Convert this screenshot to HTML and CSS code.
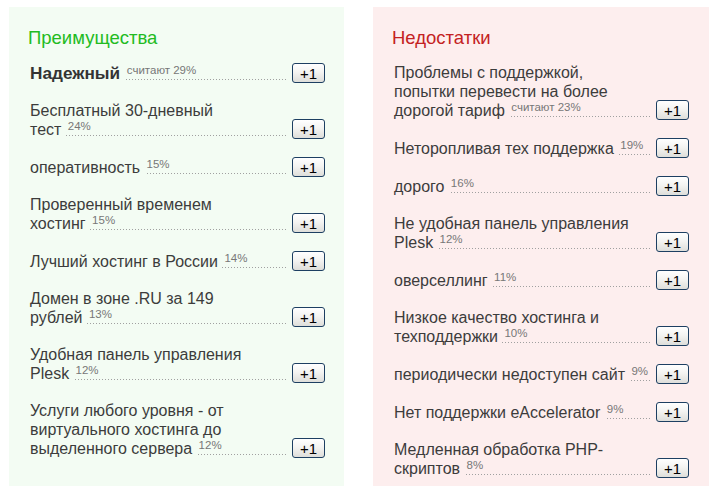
FILE: index.html
```html
<!DOCTYPE html>
<html lang="ru">
<head>
<meta charset="utf-8">
<title>Преимущества и недостатки</title>
<link rel="stylesheet" href="styles.css">
</head>
<body>
<div class="wrap">
  <section class="panel pros">
    <h2 class="title">Преимущества</h2>
    <ul class="list">
      <li class="item"><div class="label"><span class="t strong">Надежный </span><sup>считают 29%</sup></div><button class="plus">+1</button></li>
      <li class="item"><div class="label"><span class="t">Бесплатный 30-дневный<br>тест </span><sup>24%</sup></div><button class="plus">+1</button></li>
      <li class="item"><div class="label"><span class="t">оперативность </span><sup>15%</sup></div><button class="plus">+1</button></li>
      <li class="item"><div class="label"><span class="t">Проверенный временем<br>хостинг </span><sup>15%</sup></div><button class="plus">+1</button></li>
      <li class="item"><div class="label"><span class="t">Лучший хостинг в России </span><sup>14%</sup></div><button class="plus">+1</button></li>
      <li class="item"><div class="label"><span class="t">Домен в зоне .RU за 149<br>рублей </span><sup>13%</sup></div><button class="plus">+1</button></li>
      <li class="item"><div class="label"><span class="t">Удобная панель управления<br>Plesk </span><sup>12%</sup></div><button class="plus">+1</button></li>
      <li class="item"><div class="label"><span class="t">Услуги любого уровня - от<br>виртуального хостинга до<br>выделенного сервера </span><sup>12%</sup></div><button class="plus">+1</button></li>
    </ul>
  </section>
  <section class="panel cons">
    <h2 class="title">Недостатки</h2>
    <ul class="list">
      <li class="item"><div class="label"><span class="t">Проблемы с поддержкой,<br>попытки перевести на более<br>дорогой тариф </span><sup>считают 23%</sup></div><button class="plus">+1</button></li>
      <li class="item"><div class="label"><span class="t">Неторопливая тех поддержка </span><sup>19%</sup></div><button class="plus">+1</button></li>
      <li class="item"><div class="label"><span class="t">дорого </span><sup>16%</sup></div><button class="plus">+1</button></li>
      <li class="item"><div class="label"><span class="t">Не удобная панель управления<br>Plesk </span><sup>12%</sup></div><button class="plus">+1</button></li>
      <li class="item"><div class="label"><span class="t">оверселлинг </span><sup>11%</sup></div><button class="plus">+1</button></li>
      <li class="item"><div class="label"><span class="t">Низкое качество хостинга и<br>техподдержки </span><sup>10%</sup></div><button class="plus">+1</button></li>
      <li class="item"><div class="label"><span class="t">периодически недоступен сайт </span><sup>9%</sup></div><button class="plus">+1</button></li>
      <li class="item"><div class="label"><span class="t">Нет поддержки eAccelerator </span><sup>9%</sup></div><button class="plus">+1</button></li>
      <li class="item"><div class="label"><span class="t">Медленная обработка PHP-<br>скриптов </span><sup>8%</sup></div><button class="plus">+1</button></li>
    </ul>
  </section>
</div>
</body>
</html>
```
FILE: styles.css
```css
html, body {
  margin: 0;
  padding: 0;
  overflow: hidden;
  background: #ffffff;
}
body {
  font-family: "Liberation Sans", Arial, sans-serif;
  color: #3c3c3c;
}
.wrap {
  display: flex;
  gap: 29px;
  padding: 7px 0 0 9px;
}
.panel {
  width: 335px;
  min-height: 500px;
  box-sizing: border-box;
  padding: 20px 19px 0 21px;
}
.pros { background: #f3fcf3; }
.cons { background: #fdeeee; width: 336px; padding-right: 20px; }
.title {
  margin: 0 0 14px -2px;
  font-size: 18.5px;
  line-height: 22px;
  font-weight: normal;
}
.pros .title { color: #22bb22; }
.cons .title { color: #c42222; }
.list {
  list-style: none;
  margin: 0;
  padding: 0;
}
.item {
  display: flex;
  align-items: flex-end;
  gap: 6px;
  margin-bottom: 18px;
}
.label {
  flex: 1;
  min-width: 0;
  font-size: 16px;
  line-height: 19px;
  white-space: nowrap;
  background-image: linear-gradient(to right, #a0a0a0 1px, transparent 1px);
  background-size: 3px 1px;
  background-repeat: repeat-x;
  background-position: 0 calc(100% - 3px);
}
.pros .t { background: #f3fcf3; }
.cons .t { background: #fdeeee; }
.t.strong {
  font-weight: bold;
  font-size: 17.2px;
  color: #333;
}
sup {
  font-size: 11.5px;
  line-height: 0;
  vertical-align: 5px;
  color: #777;
  margin-left: 2px;
}
.plus {
  width: 33px;
  height: 20px;
  padding: 0;
  flex: none;
  font-family: "Liberation Sans", Arial, sans-serif;
  font-size: 15px;
  color: #000;
  border: 1px solid #1d3f62;
  border-radius: 3px;
  background: linear-gradient(#ffffff, #f4f4f2 45%, #dededa);
}
```
